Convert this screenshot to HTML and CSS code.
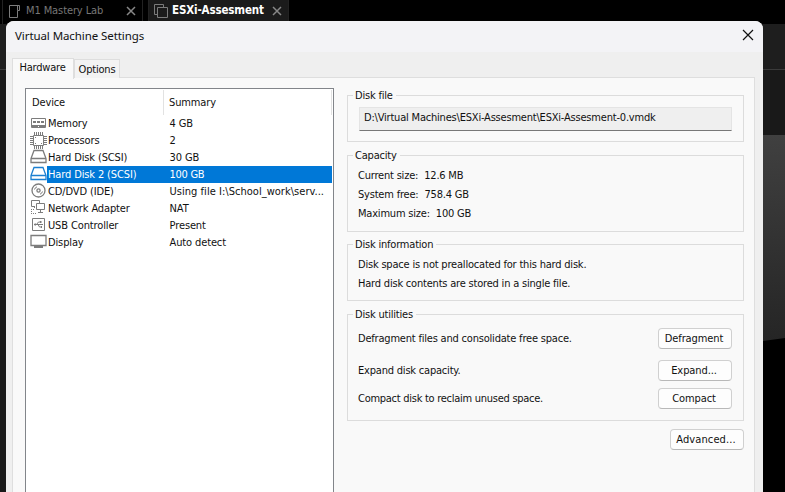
FILE: index.html
```html
<!DOCTYPE html>
<html lang="en">
<head>
<meta charset="utf-8">
<title>Virtual Machine Settings</title>
<link rel="stylesheet" href="styles.css">
</head>
<body>
<div class="app">
  <div class="doc-tabs">
    <div class="doc-tab">
      <svg class="doc-icon" viewBox="0 0 14 16"><path d="M1.500 2.500h10v5h-2v7h-8zM9.500 2.500v5"/></svg>
      <span class="doc-name">M1 Mastery Lab</span>
      <svg class="doc-close" viewBox="0 0 10 10"><path d="M1 1l8 8M9 1l-8 8"/></svg>
    </div>
    <div class="doc-tab current">
      <svg class="doc-icon" viewBox="0 0 14 16"><path d="M3.500 11.500h-3v-10h9v3M3.500 4.500h10v10h-10z"/></svg>
      <span class="doc-name">ESXi-Assesment</span>
      <svg class="doc-close" viewBox="0 0 10 10"><path d="M1 1l8 8M9 1l-8 8"/></svg>
    </div>
  </div>
  <div class="toolbar"></div>
  <div class="workspace"><div class="side"></div><div class="console"><svg viewBox="0 0 22 358" preserveAspectRatio="none"><defs><linearGradient id="shade" x1="0" y1="0" x2="0" y2="1"><stop offset="0" stop-color="#404040"/><stop offset="1" stop-color="#252525"/></linearGradient></defs><path fill="url(#shade)" d="M0 0h22v203L0 206z"/></svg></div></div>
</div>

<main class="dialog">
  <header class="titlebar">
    <h1>Virtual Machine Settings</h1>
    <svg class="close" viewBox="0 0 12 12"><path d="M1 1l10 10M11 1L1 11"/></svg>
  </header>
  <nav class="tabs"><span class="tab active">Hardware</span><span class="tab">Options</span></nav>
  <div class="page">
    <div class="devices">
      <div class="row head"><span class="name">Device</span><span class="summary">Summary</span></div>
      <div class="row"><svg class="icon" viewBox="0 0 17 17"><path d="M1.500 3.500h14v9h-14zM1 10.500h15"/><path class="thick" d="M3 7h3M7 7h3M11 7h3M2 12h6M9 12h6"/></svg><span class="name">Memory</span><span class="summary">4 GB</span></div>
      <div class="row"><svg class="icon" viewBox="0 0 17 17"><path d="M3.500 3.500h10v10h-10z"/><path d="M4.500 0v3M6.500 0v3M8.500 0v3M10.500 0v3M12.500 0v3M4.500 14v3M6.500 14v3M8.500 14v3M10.500 14v3M12.500 14v3M0 4.500h3M0 6.500h3M0 8.500h3M0 10.500h3M0 12.500h3M14 4.500h3M14 6.500h3M14 8.500h3M14 10.500h3M14 12.500h3M5 5.500h1M11 11.500h1M5 11.500h1"/></svg><span class="name">Processors</span><span class="summary">2</span></div>
      <div class="row"><svg class="icon" viewBox="0 0 17 17"><path class="outline" d="M4 1.500h9l3 8v4H1v-4zM1 9.500h15"/></svg><span class="name">Hard Disk (SCSI)</span><span class="summary">30 GB</span></div>
      <div class="row selected"><svg class="icon" viewBox="0 0 17 17"><path class="outline" d="M4 1.500h9l3 8v4H1v-4zM1 9.500h15"/></svg><span class="name">Hard Disk 2 (SCSI)</span><span class="summary">100 GB</span></div>
      <div class="row"><svg class="icon" viewBox="0 0 17 17"><circle class="outline" cx="8.500" cy="7.500" r="6.500"/><circle class="outline" cx="8.500" cy="7.500" r="1.600"/><path d="M4.500 6.500Q5 4.500 7 3.800M12.500 8.500q-.5 2-2.500 2.700"/></svg><span class="name">CD/DVD (IDE)</span><span class="summary path-text">Using file I:\School_work\serv...</span></div>
      <div class="row"><svg class="icon" viewBox="0 0 17 17"><path d="M5 6.500H1.500v-6h8V3M6.500 3.500h8v6h-8zM10.500 10v2M8 12.500h5"/><path stroke-dasharray="1 1" d="M4.500 7v2M1 9.500h4M1.500 9v4M1 13.500h6"/></svg><span class="name">Network Adapter</span><span class="summary">NAT</span></div>
      <div class="row"><svg class="icon" viewBox="0 0 17 17"><path d="M2.500 1.500h12v12h-12zM4 7.500h9M6.500 7.500l2-2.500h2M8 7.500l1.500 2.500h2"/><path class="thick" d="M4.500 7.500h1.500M10 5h1.500M11 10h1"/></svg><span class="name">USB Controller</span><span class="summary">Present</span></div>
      <div class="row"><svg class="icon" viewBox="0 0 17 17"><path class="outline" d="M1 1.500h15v10H1z"/><path class="thick" d="M4 13h9"/></svg><span class="name">Display</span><span class="summary">Auto detect</span></div>
    </div>

    <div class="details">
      <section class="group file">
        <h2>Disk file</h2>
        <div class="path">D:\Virtual Machines\ESXi-Assesment\ESXi-Assesment-0.vmdk</div>
      </section>
      <section class="group capacity">
        <h2>Capacity</h2>
        <p><span>Current size:</span><span>12.6 MB</span></p>
        <p><span>System free:</span><span>758.4 GB</span></p>
        <p><span>Maximum size:</span><span>100 GB</span></p>
      </section>
      <section class="group info">
        <h2>Disk information</h2>
        <p>Disk space is not preallocated for this hard disk.</p>
        <p>Hard disk contents are stored in a single file.</p>
      </section>
      <section class="group utilities">
        <h2>Disk utilities</h2>
        <div class="action first"><span>Defragment files and consolidate free space.</span><button>Defragment</button></div>
        <div class="action"><span>Expand disk capacity.</span><button>Expand...</button></div>
        <div class="action"><span class="tight">Compact disk to reclaim unused space.</span><button>Compact</button></div>
      </section>
      <button class="advanced">Advanced...</button>
    </div>
  </div>
</main>
</body>
</html>
```
FILE: styles.css
```css
* { box-sizing: border-box; }
body {
  margin: 0;
  width: 785px;
  height: 492px;
  overflow: hidden;
  position: relative;
  background: #000;
  color: #111;
  font: 11px/17px "DejaVu Sans Condensed", "DejaVu Sans", sans-serif;
  letter-spacing: -0.2px;
}
h1, h2, p { margin: 0; font: inherit; }
svg { fill: none; stroke: #7c7c7c; display: block; flex: none; }

.app { height: 492px; display: flex; flex-direction: column; }
.doc-tabs { height: 24px; flex: none; display: flex; gap: 5px; padding-left: 2px; }
.doc-tab {
  width: 141px;
  display: flex;
  align-items: center;
  padding: 0 6px 3px 5px;
  border: solid #222;
  border-width: 0 1px;
  color: #777;
  font-size: 11px;
  letter-spacing: -0.1px;
}
.doc-tab.current { background: #1b1b1b; color: #fff; font-weight: bold; font-size: 11.5px; letter-spacing: -0.15px; }
.doc-icon { width: 14px; height: 16px; }
.doc-name { margin-left: 4px; flex: 1; white-space: nowrap; }
.doc-close { width: 10px; height: 10px; stroke: #888; stroke-width: 1.5; }
.toolbar { height: 46px; flex: none; background: #1e1e1e; border-bottom: 1px solid #3b3b3b; }
.workspace { flex: 1; background: #191919; display: flex; justify-content: space-between; }
.side { width: 6px; }
.console { width: 22px; margin-top: 65px; background: #000; }
.console svg { width: 22px; height: 358px; stroke: none; }

.dialog {
  position: absolute;
  left: 6px;
  top: 21px;
  width: 757px;
  height: 480px;
  background: #efefef;
  border-radius: 8px 8px 0 0;
  display: flex;
  flex-direction: column;
}
.titlebar {
  height: 31px;
  flex: none;
  background: #f3f3f6;
  border-radius: 8px 8px 0 0;
  display: flex;
  justify-content: space-between;
  padding: 0 9px 0 9px;
}
.titlebar h1 { font: 11.5px/30px "Noto Sans", sans-serif; letter-spacing: -0.08px; }
.close { width: 12px; height: 12px; margin-top: 8px; stroke: #111; stroke-width: 1.2; }

.tabs { height: 26px; flex: none; display: flex; align-items: flex-end; padding-left: 6px; position: relative; z-index: 1; }
.tab { height: 19px; width: 46px; text-align: center; line-height: 20px; background: #f3f3f3; border: 1px solid #dedede; border-bottom: 0; }
.tab.active { height: 21px; width: 62px; line-height: 17px; margin-bottom: -1px; padding-right: 1px; background: #f9f9f9; }

.page {
  flex: 1;
  margin: -1px 8px 0 6px;
  background: #f9f9f9;
  border: 1px solid #dedede;
  display: flex;
  gap: 13px;
  padding: 10px 10px 0 12px;
  min-height: 0;
}
.devices { width: 309px; background: #fff; border: 1px solid #82858a; padding: 1px; flex: none; }
.row { display: flex; height: 17px; padding-left: 3px; letter-spacing: -0.13px; }
.icon { width: 17px; height: 17px; }
.name { width: 117px; padding-left: 1px; white-space: nowrap; }
.summary { width: 169px; padding-left: 6px; white-space: nowrap; }
.path-text { letter-spacing: 0.03px; }
.head { height: 25px; padding-left: 4px; line-height: 25px; }
.head .name { width: 133px; border-right: 1px solid #e2e2e2; }
.head .summary { border-right: 1px solid #e2e2e2; width: 168px; padding-left: 5px; }
.selected .name, .selected .summary { background: #0078d7; color: #fff; }
.selected .summary { letter-spacing: -0.3px; }
.selected .icon { stroke: #1c7fd0; }
.outline { stroke-width: 1.3; }
.thick { stroke-width: 2; }

.details { flex: 1; display: flex; flex-direction: column; padding-top: 7px; }
.group { border: 1px solid #dcdcdc; padding: 0 11px 0 10px; }
.group h2 { width: max-content; margin: -9px 0 0 -5px; padding: 0 3px 0 2px; background: #f9f9f9; }
.group p { height: 19px; line-height: 19px; display: flex; gap: 6px; }
.file { height: 47px; margin-bottom: 13px; }
.path { height: 24px; margin: 3px 0 0 1px; padding-left: 4px; line-height: 20px; background: #efefef; border: 1px solid #e4e4e4; border-bottom-color: #777; }
.capacity { height: 77px; margin-bottom: 12px; }
.info { height: 57px; margin-bottom: 13px; }
.utilities { height: 107px; margin-bottom: 8px; }
.capacity h2 { margin-bottom: 2px; }
.info h2 { margin-bottom: 2px; }
.action { display: flex; justify-content: space-between; align-items: center; height: 28px; }
.action.first { height: 32px; padding-bottom: 4px; margin-top: 1px; }
.tight { letter-spacing: -0.27px; }
button {
  width: 74px;
  height: 21px;
  padding: 0 2px 0 0;
  border: 1px solid #d0d0d0;
  border-bottom-color: #b8b8b8;
  border-radius: 4px;
  background: #fdfdfd;
  color: #111;
  font: inherit;
  letter-spacing: -0.1px;
}
.advanced { align-self: flex-end; letter-spacing: 0.1px; }
```
